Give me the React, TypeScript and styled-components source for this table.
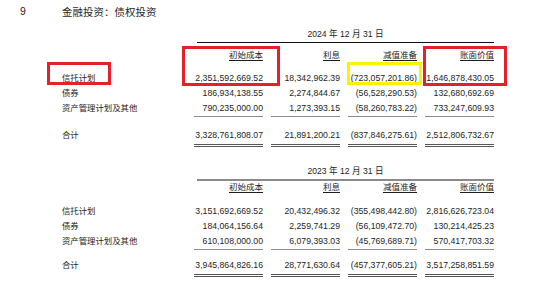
import React from 'react';
import styled, { createGlobalStyle } from 'styled-components';

const GlobalStyle = createGlobalStyle`
  html, body {
    margin: 0;
    padding: 0;
    background: #ffffff;
  }
  body {
    font-family: "Liberation Sans", "Noto Sans CJK SC", sans-serif;
    color: #1e1e1e;
  }
`;

const Page = styled.div`
  position: relative;
  width: 550px;
  height: 301px;
  overflow: hidden;
  background: #fff;
`;

const TitleRow = styled.div`
  display: flex;
  align-items: center;
  height: 22px;
  padding-left: 20px;
  font-size: 10.5px;
`;

const Index = styled.span`
  width: 42px;
  font-size: 10.5px;
`;

const Heading = styled.span`
  font-size: 10.4px;
  letter-spacing: 0.1px;
`;

const Row = styled.div<{ $h: number; $mt?: number }>`
  display: grid;
  grid-template-columns: 186px 69px 69px 69px 69px;
  column-gap: 8px;
  height: ${(p) => p.$h}px;
  margin-top: ${(p) => p.$mt ?? 0}px;
  line-height: ${(p) => p.$h}px;
`;

const DateCell = styled.div<{ $strong?: boolean }>`
  grid-column: 2 / 6;
  margin-left: 3px;
  text-align: center;
  font-size: 8.6px;
  line-height: 14px;
  height: 15px;
  border-bottom: ${(p) => (p.$strong ? '2px solid #8a8a8a' : '1px solid #111')};
`;

const Label = styled.div`
  padding-left: 62px;
  font-size: 8.4px;
  white-space: nowrap;
`;

const Head = styled.div`
  text-align: right;
  font-size: 8.5px;
  text-decoration: underline;
  text-underline-offset: 1.5px;
  text-decoration-thickness: 1px;
`;

const Num = styled.div<{ $line?: 'single' | 'double' }>`
  text-align: right;
  font-size: 8.7px;
  white-space: nowrap;
  box-sizing: border-box;
  border-bottom: ${(p) =>
    p.$line === 'single' ? '1px solid #8c8c8c' : p.$line === 'double' ? '3px double #555' : 'none'};
`;

const Mark = styled.div<{ $color: string; $x: number; $y: number; $w: number; $h: number }>`
  position: absolute;
  left: ${(p) => p.$x}px;
  top: ${(p) => p.$y}px;
  width: ${(p) => p.$w}px;
  height: ${(p) => p.$h}px;
  border: 3px solid ${(p) => p.$color};
  box-sizing: border-box;
  pointer-events: none;
`;

interface Line {
  label: string;
  values: string[];
}

interface Block {
  date: string;
  rows: Line[];
  total: string[];
}

const heads = ['初始成本', '利息', '减值准备', '账面价值'];

const blocks: Block[] = [
  {
    date: '2024 年 12 月 31 日',
    rows: [
      { label: '信托计划', values: ['2,351,592,669.52', '18,342,962.39', '(723,057,201.86)', '1,646,878,430.05'] },
      { label: '债券', values: ['186,934,138.55', '2,274,844.67', '(56,528,290.53)', '132,680,692.69'] },
      { label: '资产管理计划及其他', values: ['790,235,000.00', '1,273,393.15', '(58,260,783.22)', '733,247,609.93'] },
    ],
    total: ['3,328,761,808.07', '21,891,200.21', '(837,846,275.61)', '2,512,806,732.67'],
  },
  {
    date: '2023 年 12 月 31 日',
    rows: [
      { label: '信托计划', values: ['3,151,692,669.52', '20,432,496.32', '(355,498,442.80)', '2,816,626,723.04'] },
      { label: '债券', values: ['184,064,156.64', '2,259,741.29', '(56,109,472.70)', '130,214,425.23'] },
      { label: '资产管理计划及其他', values: ['610,108,000.00', '6,079,393.03', '(45,769,689.71)', '570,417,703.32'] },
    ],
    total: ['3,945,864,826.16', '28,771,630.64', '(457,377,605.21)', '3,517,258,851.59'],
  },
];

// spacing differs a little between the two year blocks in the source
const gaps = [
  { date: 5, head: 5, rows: 9, total: 10 },
  { date: 20, head: 0, rows: 10, total: 7 },
];

const Section: React.FC<{ block: Block; idx: number }> = ({ block, idx }) => {
  const g = gaps[idx];
  return (
    <>
      <Row $h={16} $mt={g.date}>
        <div />
        <DateCell $strong={idx > 0}>{block.date}</DateCell>
      </Row>
      <Row $h={14} $mt={g.head}>
        <div />
        {heads.map((h) => (
          <Head key={h}>{h}</Head>
        ))}
      </Row>
      {block.rows.map((r, i) => (
        <Row key={r.label} $h={15} $mt={i === 0 ? g.rows : 0}>
          <Label>{r.label}</Label>
          {r.values.map((v, j) => (
            <Num key={j} $line={i === block.rows.length - 1 ? 'single' : undefined}>
              {v}
            </Num>
          ))}
        </Row>
      ))}
      <Row $h={18} $mt={g.total}>
        <Label>合计</Label>
        {block.total.map((v, j) => (
          <Num key={j} $line="double">
            {v}
          </Num>
        ))}
      </Row>
    </>
  );
};

export default function App() {
  return (
    <Page>
      <GlobalStyle />
      <TitleRow>
        <Index>9</Index>
        <Heading>金融投资：债权投资</Heading>
      </TitleRow>
      {blocks.map((b, i) => (
        <Section key={b.date} block={b} idx={i} />
      ))}
      <Mark $color="#e5202b" $x={182} $y={46} $w={98} $h={40} />
      <Mark $color="#e5202b" $x={47} $y={62} $w={64} $h={23} />
      <Mark $color="#fff200" $x={347} $y={62} $w={75} $h={23} />
      <Mark $color="#e5202b" $x={423} $y={46} $w={84} $h={40} />
    </Page>
  );
}
